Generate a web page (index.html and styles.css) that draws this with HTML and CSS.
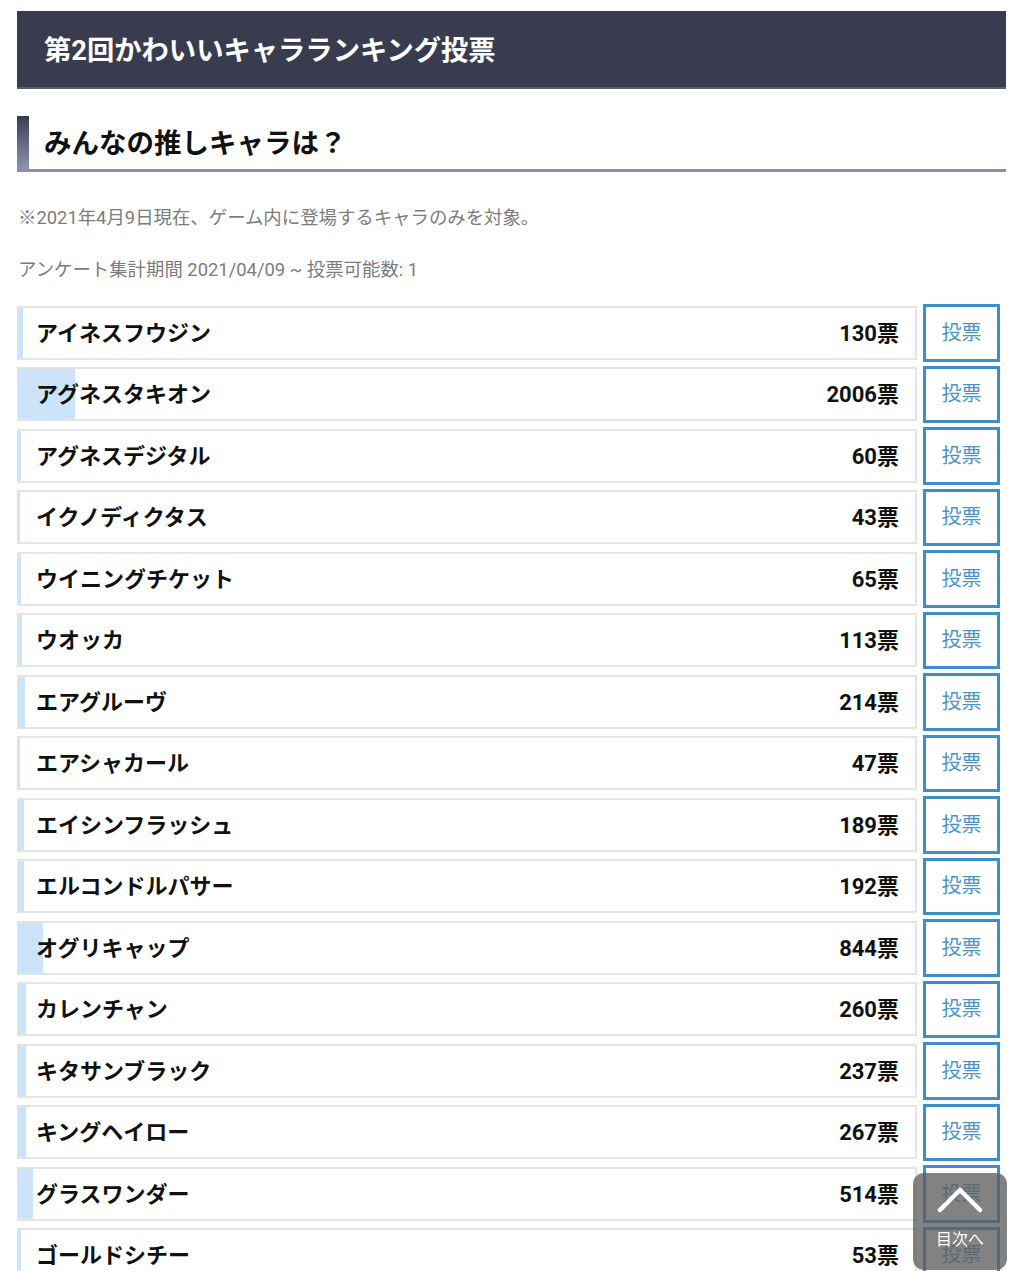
FILE: index.html
```html
<!DOCTYPE html>
<html lang="ja">
<head>
<meta charset="utf-8">
<title>第2回かわいいキャラランキング投票</title>
<link rel="stylesheet" href="styles.css">
</head>
<body>
<div class="page">
  <h1 class="title">第2回かわいいキャラランキング投票</h1>
  <h2 class="subtitle">みんなの推しキャラは？</h2>
  <p class="note">※2021年4月9日現在、ゲーム内に登場するキャラのみを対象。</p>
  <p class="period">アンケート集計期間 2021/04/09 ~ 投票可能数: 1</p>
  <ul class="poll">
    <li class="item"><div class="bar" style="--p:0.406%"><span class="name">アイネスフウジン</span><span class="count">130票</span></div><button class="vote">投票</button></li>
    <li class="item"><div class="bar" style="--p:6.27%"><span class="name">アグネスタキオン</span><span class="count">2006票</span></div><button class="vote">投票</button></li>
    <li class="item"><div class="bar" style="--p:0.19%"><span class="name">アグネスデジタル</span><span class="count">60票</span></div><button class="vote">投票</button></li>
    <li class="item"><div class="bar" style="--p:0.13%"><span class="name">イクノディクタス</span><span class="count">43票</span></div><button class="vote">投票</button></li>
    <li class="item"><div class="bar" style="--p:0.2%"><span class="name">ウイニングチケット</span><span class="count">65票</span></div><button class="vote">投票</button></li>
    <li class="item"><div class="bar" style="--p:0.35%"><span class="name">ウオッカ</span><span class="count">113票</span></div><button class="vote">投票</button></li>
    <li class="item"><div class="bar" style="--p:0.67%"><span class="name">エアグルーヴ</span><span class="count">214票</span></div><button class="vote">投票</button></li>
    <li class="item"><div class="bar" style="--p:0.15%"><span class="name">エアシャカール</span><span class="count">47票</span></div><button class="vote">投票</button></li>
    <li class="item"><div class="bar" style="--p:0.59%"><span class="name">エイシンフラッシュ</span><span class="count">189票</span></div><button class="vote">投票</button></li>
    <li class="item"><div class="bar" style="--p:0.6%"><span class="name">エルコンドルパサー</span><span class="count">192票</span></div><button class="vote">投票</button></li>
    <li class="item"><div class="bar" style="--p:2.64%"><span class="name">オグリキャップ</span><span class="count">844票</span></div><button class="vote">投票</button></li>
    <li class="item"><div class="bar" style="--p:0.81%"><span class="name">カレンチャン</span><span class="count">260票</span></div><button class="vote">投票</button></li>
    <li class="item"><div class="bar" style="--p:0.74%"><span class="name">キタサンブラック</span><span class="count">237票</span></div><button class="vote">投票</button></li>
    <li class="item"><div class="bar" style="--p:0.83%"><span class="name">キングヘイロー</span><span class="count">267票</span></div><button class="vote">投票</button></li>
    <li class="item"><div class="bar" style="--p:1.61%"><span class="name">グラスワンダー</span><span class="count">514票</span></div><button class="vote">投票</button></li>
    <li class="item"><div class="bar" style="--p:0.17%"><span class="name">ゴールドシチー</span><span class="count">53票</span></div><button class="vote">投票</button></li>
  </ul>
</div>
<a class="toc" href="#">
  <svg class="chev" width="48" height="28" viewBox="0 0 48 28"><polyline points="4,25 24,5 44,25" fill="none" stroke="#fff" stroke-width="4.5" stroke-linecap="round" stroke-linejoin="round"/></svg>
  <span class="toc-label">目次へ</span>
</a>
</body>
</html>
```
FILE: styles.css
```css
html { overflow: hidden; }
body {
  margin: 0;
  background: #fff;
  font-family: "Roboto", "Noto Sans CJK JP", sans-serif;
  color: #111;
}
.page {
  padding: 11px 18px 0 17px;
}
.title {
  margin: 0;
  height: 78px;
  box-sizing: border-box;
  background: #393c4f;
  border-bottom: 2px solid #5b5e6d;
  color: #fff;
  font-size: 27.3px;
  font-weight: 700;
  display: flex;
  align-items: center;
  padding-left: 27px;
  padding-bottom: 2px;
}
.subtitle {
  margin: 27px 0 0;
  height: 56px;
  box-sizing: border-box;
  padding-left: 27px;
  padding-bottom: 3px;
  display: flex;
  align-items: center;
  font-size: 27.5px;
  font-weight: 700;
  color: #111;
  background: linear-gradient(#3a3d51, #8c92b2) no-repeat left top / 12px 100%;
  border-bottom: 3px solid #8b8ea9;
}
.note, .period {
  margin: 0;
  font-size: 18.4px;
  line-height: 26px;
  color: #7c7c7c;
  padding-left: 1px;
}
.note { margin-top: 33px; }
.period { margin-top: 26px; }
.poll {
  list-style: none;
  margin: 21px 0 0;
  padding: 0;
}
.item {
  display: flex;
  align-items: center;
  gap: 6px;
  height: 57.5px;
  margin-bottom: 4px;
}
.bar {
  flex: 1;
  height: 54px;
  box-sizing: border-box;
  border: 2px solid #e4e4e4;
  border-left-color: #d3e5f6;
  background: linear-gradient(to right, #cce4f9 var(--p), #fff var(--p));
  display: flex;
  align-items: center;
  justify-content: space-between;
  padding: 0 16px 4px 17px;
}
.name {
  font-size: 22px;
  font-weight: 700;
  color: #111;
}
.count {
  font-size: 22px;
  font-weight: 700;
  color: #111;
}
.vote {
  width: 77px;
  height: 57.5px;
  box-sizing: border-box;
  border: 3px solid #3d8fca;
  background: #fff;
  color: #4b94c7;
  font-family: "Roboto", "Noto Sans CJK JP", sans-serif;
  font-size: 20px;
  padding: 0 0 3px;
  margin-right: 6px;
}
.toc {
  position: fixed;
  left: 913px;
  top: 1173px;
  width: 94px;
  height: 97px;
  border-radius: 11px;
  background: rgba(95, 95, 95, 0.78);
  display: flex;
  flex-direction: column;
  align-items: center;
  text-decoration: none;
}
.chev {
  margin-top: 12px;
}
.toc-label {
  margin-top: 17px;
  color: #fff;
  font-size: 16px;
  line-height: 20px;
}
```
